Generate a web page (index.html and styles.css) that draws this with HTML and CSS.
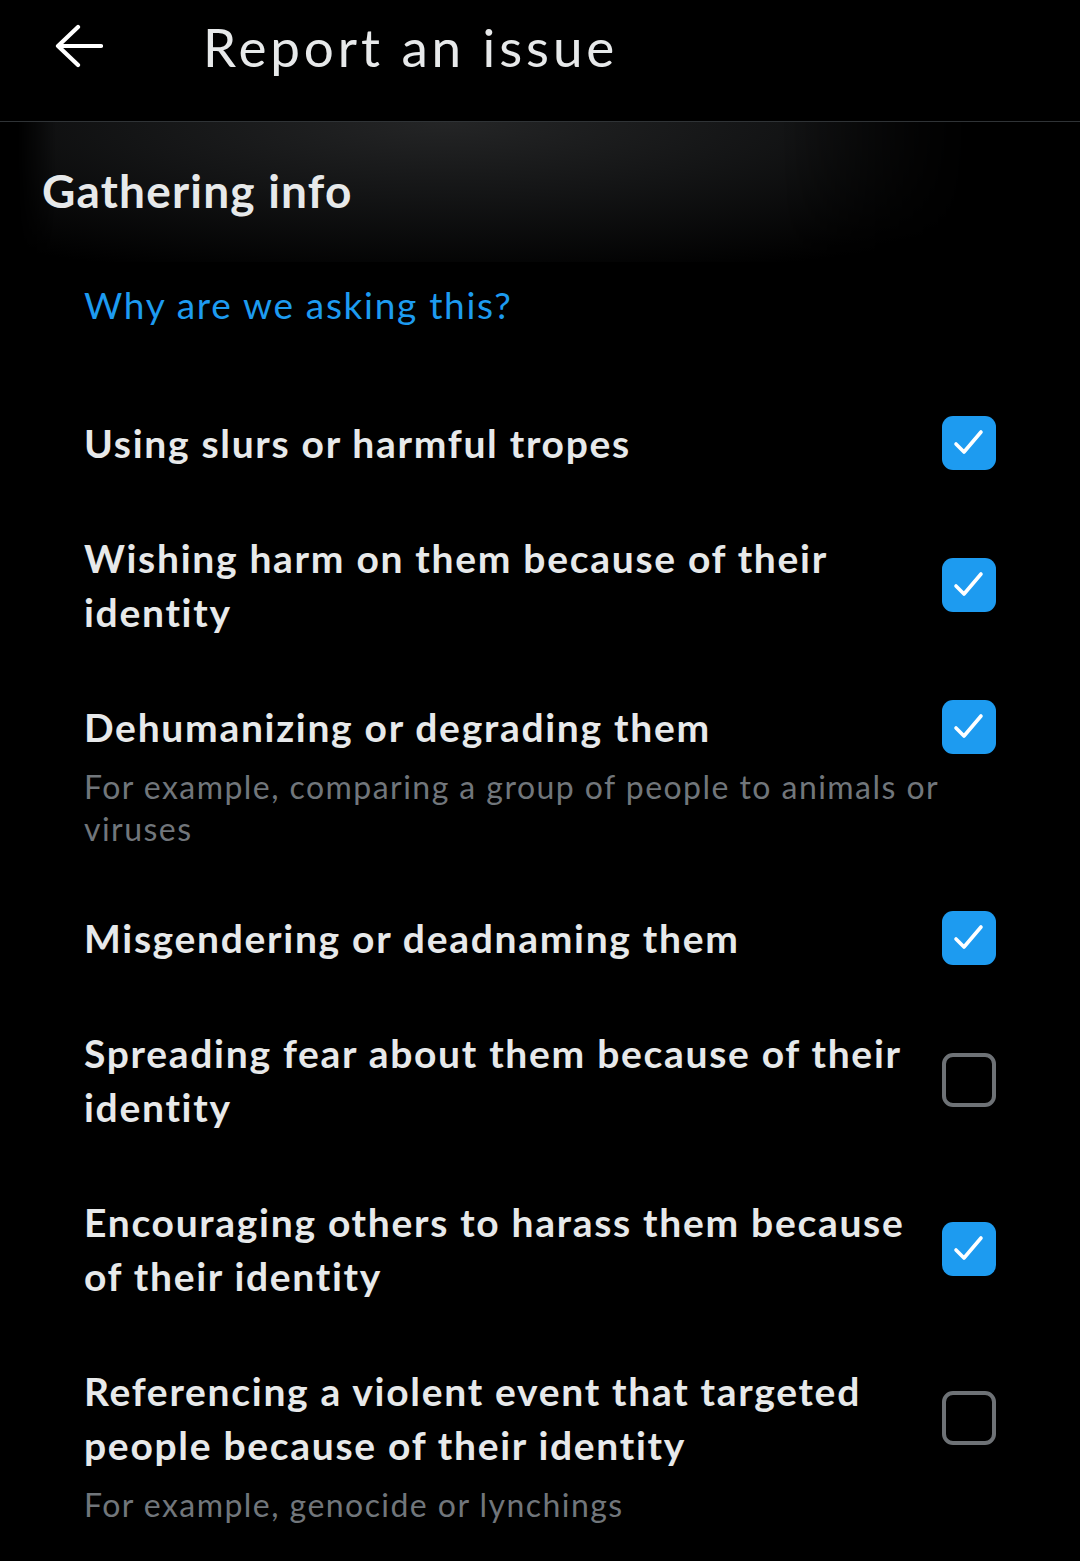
FILE: index.html
```html
<!DOCTYPE html>
<html lang="en">
<head>
  <meta charset="UTF-8" />
  <meta name="viewport" content="width=device-width, initial-scale=1.0" />
  <title>Report an issue</title>
  <link rel="stylesheet" href="styles.css">
</head>
<body>

  <div class="topbar">
    <button class="back-btn" aria-label="Back">
      <svg width="48" height="44" viewBox="0 0 48 44">
        <path d="M23 3 L3 22 L23 41 M3 22 H46" fill="none" stroke="#fff" stroke-width="4.2" stroke-linecap="round" stroke-linejoin="round"/>
      </svg>
    </button>
    <h1>Report an issue</h1>
  </div>

  <div class="gathering">
    <h2>Gathering info</h2>
  </div>

  <div class="content">
    <a class="why-link" href="#">Why are we asking this?</a>

    <div class="options">
      <div class="option">
        <div class="label">Using slurs or harmful tropes</div>
        <span class="check on"></span>
      </div>

      <div class="option">
        <div class="label">Wishing harm on them because of their identity</div>
        <span class="check on"></span>
      </div>

      <div class="option">
        <div class="label">Dehumanizing or degrading them</div>
        <span class="check on"></span>
        <div class="desc">For example, comparing a group of people to animals or viruses</div>
      </div>

      <div class="option">
        <div class="label">Misgendering or deadnaming them</div>
        <span class="check on"></span>
      </div>

      <div class="option">
        <div class="label">Spreading fear about them because of their identity</div>
        <span class="check"></span>
      </div>

      <div class="option">
        <div class="label">Encouraging others to harass them because of their identity</div>
        <span class="check on"></span>
      </div>

      <div class="option">
        <div class="label">Referencing a violent event that targeted people because of their identity</div>
        <span class="check"></span>
        <div class="desc">For example, genocide or lynchings</div>
      </div>
    </div>
  </div>

</body>
</html>
```

FILE: styles.css
```css
body {
  font-family: Lato, 'Noto Sans', sans-serif;
  background-color: #000;
  margin: 0;
  padding: 0;
  color: #e7e9ea;
  overflow: hidden;
}

.topbar {
  display: flex;
  align-items: center;
  height: 92px;
  padding-bottom: 29px;
  border-bottom: 1px solid #2f3336;
}

.back-btn {
  background: none;
  border: none;
  padding: 0;
  margin-left: 55px;
  width: 48px;
  height: 44px;
  cursor: pointer;
}

.back-btn svg {
  display: block;
}

.topbar h1 {
  margin: 0 0 0 100px;
  font-size: 53px;
  font-weight: 400;
  letter-spacing: 3.9px;
  color: #e7e9ea;
}

.gathering {
  position: relative;
  height: 140px;
  padding-left: 42px;
  display: flex;
  align-items: center;
}

/* brillo gris detras del titulo */
.gathering::before {
  content: '';
  position: absolute;
  top: 0;
  bottom: 0;
  left: 18px;
  right: 110px;
  z-index: -1;
  background:
    radial-gradient(ellipse 75% 115% at 45% 0%, rgba(38,39,40,0.95) 0%, rgba(22,23,24,0.9) 45%, rgba(0,0,0,0) 100%);
  -webkit-mask-image: linear-gradient(to right, transparent 0, #000 4%, #000 80%, transparent 100%);
  mask-image: linear-gradient(to right, transparent 0, #000 4%, #000 80%, transparent 100%);
}

.gathering h2 {
  margin: 0 0 4px;
  font-size: 46px;
  font-weight: 700;
  letter-spacing: 1.2px;
  color: #e7e9ea;
}

.content {
  padding: 0 84px 0 84px;
}

.why-link {
  display: block;
  margin-top: 19px;
  font-size: 37px;
  line-height: 48px;
  letter-spacing: 1.7px;
  color: #1d9bf0;
  text-decoration: none;
}

.options {
  margin-top: 57px;
}

.option {
  display: grid;
  grid-template-columns: 1fr 54px;
  column-gap: 4px;
  padding: 30px 0 31px;
}

.label {
  grid-column: 1;
  grid-row: 1;
  font-size: 39px;
  font-weight: 700;
  line-height: 54px;
  letter-spacing: 1.7px;
}

.desc {
  grid-column: 1 / -1;
  grid-row: 2;
  margin-top: 12px;
  font-size: 32px;
  line-height: 42px;
  letter-spacing: 1.45px;
  color: #71767b;
}

.check {
  grid-column: 2;
  grid-row: 1;
  align-self: center;
  box-sizing: border-box;
  width: 54px;
  height: 54px;
  border: 4px solid #6e7276;
  border-radius: 11px;
}

.check.on {
  border: none;
  background-color: #1d9bf0;
  background-image: url("data:image/svg+xml,%3Csvg xmlns='http://www.w3.org/2000/svg' width='54' height='54' viewBox='0 0 54 54'%3E%3Cpath d='M14 28 L22 36 L39 16' fill='none' stroke='white' stroke-width='3.6' stroke-linecap='round' stroke-linejoin='round'/%3E%3C/svg%3E");
}
```
